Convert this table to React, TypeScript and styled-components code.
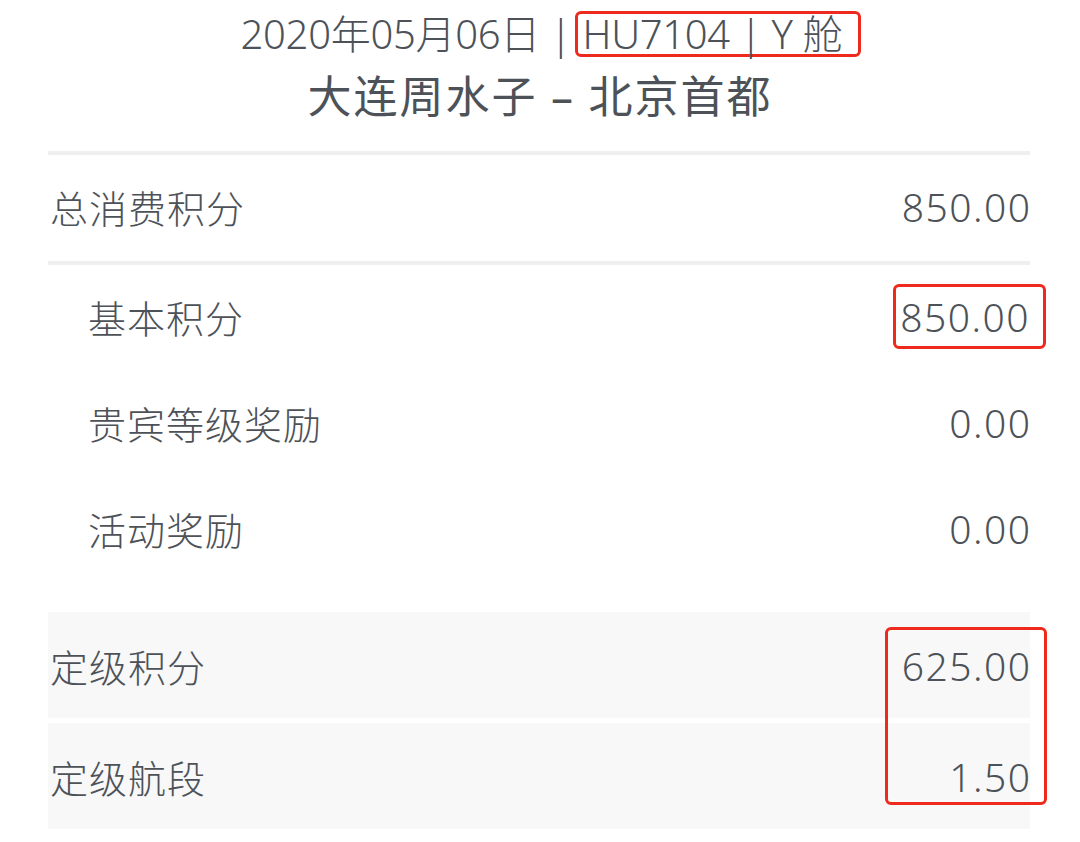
import React from 'react'
import styled, { createGlobalStyle } from 'styled-components'

const GlobalStyle = createGlobalStyle`
  html, body {
    margin: 0;
    padding: 0;
    background: #ffffff;
  }
  body {
    font-family: "Noto Sans", "Noto Sans CJK SC", sans-serif;
    color: #4d5258;
  }
`

const ACCENT = '#ee2a1e'

interface PointRow {
  label: string
  value: string
  marked?: boolean
}

const subRows: PointRow[] = [
  { label: '基本积分', value: '850.00', marked: true },
  { label: '贵宾等级奖励', value: '0.00' },
  { label: '活动奖励', value: '0.00' }
]

const gradeRows: PointRow[] = [
  { label: '定级积分', value: '625.00' },
  { label: '定级航段', value: '1.50' }
]

const App: React.FC = () => {
  return (
    <Page>
      <GlobalStyle />
      <Header>
        <FlightLine>
          2020年05月06日 |<FlightMark>HU7104 | Y 舱</FlightMark>
        </FlightLine>
        <RouteLine>大连周水子 – 北京首都</RouteLine>
      </Header>

      <Divider />
      <Row>
        <Label>总消费积分</Label>
        <Value>850.00</Value>
      </Row>
      <Divider />

      {subRows.map((row) => (
        <Row key={row.label} $indent>
          <Label>{row.label}</Label>
          {row.marked ? <MarkedValue>{row.value}</MarkedValue> : <Value>{row.value}</Value>}
        </Row>
      ))}

      <GradeSection>
        {gradeRows.map((row) => (
          <GradeRow key={row.label}>
            <Label>{row.label}</Label>
            <Value>{row.value}</Value>
          </GradeRow>
        ))}
        <GradeMark />
      </GradeSection>
    </Page>
  )
}

const Page = styled.div`
  width: 982px;
  margin-left: 48px;
  padding-bottom: 14px;
`

const Header = styled.div`
  display: flex;
  flex-direction: column;
  align-items: center;
  padding-top: 9px;
  margin-left: -48px;
  width: 1080px;
  height: 151px;
  box-sizing: border-box;
`

const FlightLine = styled.div`
  font-size: 40px;
  font-weight: 300;
  line-height: 50px;
  letter-spacing: -0.3px;
  white-space: nowrap;
  padding-left: 22px;
`

const FlightMark = styled.span`
  display: inline-block;
  margin-left: 4px;
  padding: 0 16px 0 4px;
  line-height: 40px;
  border: 3px solid ${ACCENT};
  border-radius: 6px;
`

const RouteLine = styled.div`
  margin-top: 8px;
  font-size: 44px;
  font-weight: 400;
  line-height: 58px;
  letter-spacing: 2px;
`

const Divider = styled.div`
  height: 4px;
  background: #efefef;
`

const Row = styled.div<{ $indent?: boolean }>`
  display: flex;
  align-items: center;
  justify-content: space-between;
  height: 106px;
  padding-left: ${(p) => (p.$indent ? 40 : 2)}px;
  padding-bottom: 4px;
  box-sizing: border-box;
`

const Label = styled.span`
  font-family: "Noto Sans CJK SC", sans-serif;
  font-size: 38px;
  font-weight: 300;
  letter-spacing: 1px;
`

const Value = styled.span`
  font-family: "Noto Sans", "Liberation Sans", sans-serif;
  font-size: 39px;
  font-weight: 300;
  letter-spacing: 1.5px;
  margin-right: -1.5px;
`

const MarkedValue = styled(Value)`
  display: inline-block;
  padding: 0 13px 0 4px;
  margin-right: -16px;
  line-height: 59px;
  border: 3px solid ${ACCENT};
  border-radius: 6px;
`

const GradeSection = styled.div`
  position: relative;
  display: flex;
  flex-direction: column;
  gap: 5px;
  margin-top: 29px;
`

const GradeRow = styled.div`
  display: flex;
  align-items: center;
  justify-content: space-between;
  height: 106px;
  padding-left: 2px;
  background: #f8f8f8;
`

const GradeMark = styled.div`
  position: absolute;
  top: 15px;
  right: -17px;
  width: 156px;
  height: 172px;
  border: 3px solid ${ACCENT};
  border-radius: 6px;
`

export default App
